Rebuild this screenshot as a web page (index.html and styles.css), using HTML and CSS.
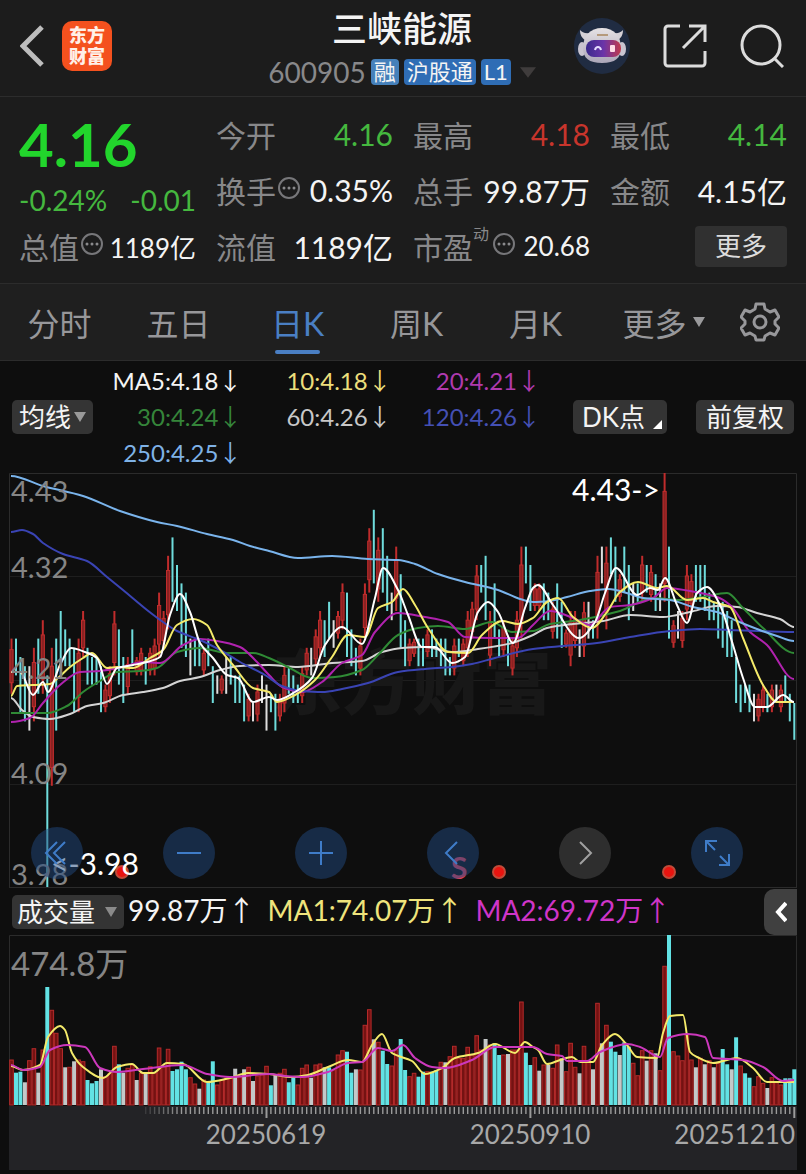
FILE: index.html
```html
<!DOCTYPE html>
<html lang="zh-CN">
<head>
    <meta charset="UTF-8">
    <meta name="viewport" content="width=device-width, initial-scale=1.0">
    <title>三峡能源 600905</title>
    <link rel="stylesheet" href="styles.css">
</head>
<body>
    <header class="top-bar">
        <div class="top-left">
            <button class="icon-button" aria-label="返回">
                <svg width="24" height="42" viewBox="0 0 24 42" fill="none" stroke="#bdbdbd" stroke-width="5"><path d="M22 2 3 21 22 40"/></svg>
            </button>
            <a href="#" class="logo"><span>东方</span><span>财富</span></a>
        </div>
        <div class="stock">
            <h1>三峡能源</h1>
            <div class="stock-code">
                <span class="code">600905</span>
                <span class="tag tag-light">融</span>
                <span class="tag">沪股通</span>
                <span class="tag">L1</span>
                <svg class="code-arrow" width="16" height="11" viewBox="0 0 18 12"><path d="M0 0h18L9 12z" fill="#3f3c3c"/></svg>
            </div>
        </div>
        <div class="top-right">
            <button class="icon-button" aria-label="智能助手">
                <svg width="56" height="56" viewBox="0 0 56 56">
                    <defs>
                        <linearGradient id="visor" x1="0" x2="1"><stop offset="0" stop-color="#3b2a8c"/><stop offset=".5" stop-color="#6a34a8"/><stop offset="1" stop-color="#c23a4c"/></linearGradient>
                        <linearGradient id="helmet" x1="0" y1="0" x2="0" y2="1"><stop offset="0" stop-color="#e6e2e4"/><stop offset="1" stop-color="#aba6b8"/></linearGradient>
                    </defs>
                    <circle cx="28" cy="28" r="28" fill="#202c42"/>
                    <path d="M6 12c0 5 2 8 5 10l5-7c-5 1-8-1-10-3zM49 12c0 5-2 8-5 10l-5-7c5 1 8-1 10-3z" fill="#d5d1d6"/>
                    <ellipse cx="8" cy="31" rx="4" ry="7" fill="#c9c5d0"/>
                    <ellipse cx="48" cy="31" rx="4" ry="7" fill="#c9c5d0"/>
                    <path d="M9 30c0-12 7-20 19-20s19 8 19 20c0 10-6 15-19 15S9 40 9 30z" fill="url(#helmet)"/>
                    <path d="M23 17h11" stroke="#b59a7c" stroke-width="2"/>
                    <rect x="12" y="22" width="35" height="17" rx="8" fill="url(#visor)"/>
                    <path d="M21 32c1-4 5-4 6 0" fill="none" stroke="#e5dcff" stroke-width="2"/>
                    <rect x="36" y="27" width="5" height="7" rx="1" fill="#ffdce6"/>
                </svg>
            </button>
            <button class="icon-button" aria-label="分享">
                <svg width="44" height="44" viewBox="0 0 44 44" fill="none" stroke="#dcdcdc" stroke-width="3"><path d="M17 2H5a3 3 0 0 0-3 3v34a3 3 0 0 0 3 3h34a3 3 0 0 0 3-3V27M26 2h16v16M41 3 20 24"/></svg>
            </button>
            <button class="icon-button" aria-label="搜索">
                <svg width="44" height="44" viewBox="0 0 44 44" fill="none" stroke="#dcdcdc" stroke-width="3"><circle cx="21" cy="21" r="19"/><path d="m34 34 9 9"/></svg>
            </button>
        </div>
    </header>

    <section class="quote">
        <div class="quote-main">
            <div class="price">4.16</div>
            <div class="change"><span>-0.24%</span><span>-0.01</span></div>
            <div class="cell small"><span class="name">总值</span><svg class="info"><use href="#info"/></svg><span class="value">1189亿</span></div>
        </div>
        <div class="quote-col">
            <div class="cell"><span class="name">今开</span><span class="value down">4.16</span></div>
            <div class="cell"><span class="name">换手</span><svg class="info"><use href="#info"/></svg><span class="value">0.35%</span></div>
            <div class="cell"><span class="name">流值</span><span class="value">1189亿</span></div>
        </div>
        <div class="quote-col">
            <div class="cell"><span class="name">最高</span><span class="value up">4.18</span></div>
            <div class="cell"><span class="name">总手</span><span class="value">99.87万</span></div>
            <div class="cell small"><span class="name">市盈<sup>动</sup></span><svg class="info"><use href="#info"/></svg><span class="value">20.68</span></div>
        </div>
        <div class="quote-col">
            <div class="cell"><span class="name">最低</span><span class="value down">4.14</span></div>
            <div class="cell"><span class="name">金额</span><span class="value">4.15亿</span></div>
            <div class="cell"><button class="more-button">更多</button></div>
        </div>
    </section>

    <nav class="tabs">
        <button>分时</button>
        <button>五日</button>
        <button class="active">日K</button>
        <button>周K</button>
        <button>月K</button>
        <button>更多<svg width="12" height="12" viewBox="0 0 12 12"><path d="M0 1h12L6 11z" fill="#9a9a9c"/></svg></button>
        <button aria-label="设置">
            <svg width="40" height="40" viewBox="0 0 40 40" fill="none" stroke="#97979a" stroke-width="3" stroke-linejoin="round">
                <path d="M16 2h8l1 5 5 3 5-2 4 7-4 4v3l4 4-4 7-5-2-5 3-1 4h-8l-1-4-5-3-5 2-4-7 4-4v-3l-4-4 4-7 5 2 5-3z"/>
                <circle cx="20" cy="20" r="6"/>
            </svg>
        </button>
    </nav>

    <main class="charts">
        <section class="legend">
            <button class="chip">均线<svg width="12" height="12" viewBox="0 0 12 12"><path d="M0 1h12L6 11z" fill="#9a9a9a"/></svg></button>
            <ul class="averages">
                <li class="ma5">MA5:4.18<i>↓</i></li>
                <li class="ma10">10:4.18<i>↓</i></li>
                <li class="ma20">20:4.21<i>↓</i></li>
                <li class="ma30">30:4.24<i>↓</i></li>
                <li class="ma60">60:4.26<i>↓</i></li>
                <li class="ma120">120:4.26<i>↓</i></li>
                <li class="ma250">250:4.25<i>↓</i></li>
            </ul>
            <button class="chip chip-dk">DK点<svg width="9" height="9" viewBox="0 0 9 9"><path d="M9 0v9H0z" fill="#fff"/></svg></button>
            <button class="chip chip-adjust">前复权</button>
        </section>

        <section class="k-chart">
            <svg class="plot" viewBox="0 0 788 414" role="img" aria-label="日K线">
                <g class="grid">
                    <path d="M0 103.500h788M0 207.500h788M0 311.500h788"/>
                    <path class="frame" d="M.5 414V.5h787V414"/>
                </g>
                <text class="watermark" x="263" y="236">东方财富</text>
                <g id="candles"></g>
                <g id="price-lines" class="lines"></g>
                <g class="axis">
                    <text x="2" y="29">4.43</text>
                    <text x="2" y="105">4.32</text>
                    <text x="2" y="206">4.21</text>
                    <text x="2" y="311">4.09</text>
                    <text x="2" y="412">3.98</text>
                </g>
                <text class="mark" x="563" y="28">4.43-&gt;</text>
                <g fill="#e81410" stroke="#c24a38" stroke-width="2">
                    <circle cx="113" cy="399" r="6"/>
                    <circle cx="490" cy="399" r="6"/>
                    <circle cx="660" cy="399" r="6"/>
                </g>
                <text class="sell" x="442" y="406">S</text>
                <text class="mark" x="42" y="402">&lt;-3.98</text>
            </svg>
            <div class="controls">
                <button aria-label="最早"><svg viewBox="0 0 52 52"><path d="M26 15 15 26l11 11M34 15 23 26l11 11"/></svg></button>
                <button aria-label="缩小"><svg viewBox="0 0 52 52"><path d="M14 26h24"/></svg></button>
                <button aria-label="放大"><svg viewBox="0 0 52 52"><path d="M14 26h24M26 14v24"/></svg></button>
                <button aria-label="向左"><svg viewBox="0 0 52 52"><path d="M30 15 19 26l11 11"/></svg></button>
                <button class="disabled" aria-label="向右"><svg viewBox="0 0 52 52"><path d="m21 15 11 11-11 11"/></svg></button>
                <button aria-label="全屏"><svg viewBox="0 0 52 52"><path d="M15 25V14h11M15 14l9 9M28 38h10V27M38 38l-9-9"/></svg></button>
            </div>
        </section>

        <section class="volume-bar">
            <button class="chip">成交量<svg width="12" height="12" viewBox="0 0 12 12"><path d="M0 1h12L6 11z" fill="#8a8a8a"/></svg></button>
            <span class="vol">99.87万<i>↑</i></span>
            <span class="vol vol-ma1">MA1:74.07万<i>↑</i></span>
            <span class="vol vol-ma2">MA2:69.72万<i>↑</i></span>
            <button class="collapse" aria-label="展开"><svg width="12" height="22" viewBox="0 0 12 22" fill="none" stroke="#fff" stroke-width="4"><path d="M11 2 3 11l8 9"/></svg></button>
        </section>

        <section class="volume-chart">
            <svg class="plot" viewBox="0 0 788 235" role="img" aria-label="成交量">
                <path class="frame" d="M.5 170V.5h787V170"/>
                <rect class="date-strip" y="171" width="788" height="64"/>
                <text class="volume-max" x="2" y="41">474.8万</text>
                <g id="volumes"></g>
                <g id="volume-lines" class="lines"></g>
                <g id="ticks"></g>
                <g class="dates">
                    <text x="257" y="209" text-anchor="middle">20250619</text>
                    <text x="521" y="209" text-anchor="middle">20250910</text>
                    <text x="786" y="209" text-anchor="end">20251210</text>
                </g>
            </svg>
        </section>
    </main>

    <svg class="symbols" width="0" height="0">
        <symbol id="info" viewBox="0 0 22 22">
            <circle cx="11" cy="11" r="10" fill="none" stroke="#77777a" stroke-width="2"/>
            <g fill="#8a8a8c"><circle cx="6" cy="11" r="1.500"/><circle cx="11" cy="11" r="1.500"/><circle cx="16" cy="11" r="1.500"/></g>
        </symbol>
    </svg>

    <script src="chart.js"></script>
</body>
</html>
```
FILE: styles.css
```css
:root {
    --panel: #1c1c1c;
    --chart: #0e0e0e;
    --line: #2c2c2c;
    --chip: #343434;
    --gray: #88888a;
    --green: #45b83f;
    --red: #c8352c;
    --blue: #4a7fc4;
}

* {
    box-sizing: border-box;
}

body {
    margin: 0;
    background: var(--chart);
    color: #f4f4f4;
    font-family: Lato, "Noto Sans CJK SC", sans-serif;
    font-size: 30px;
}

button {
    padding: 0;
    border: none;
    background: none;
    color: inherit;
    font: inherit;
    cursor: pointer;
}

svg {
    display: block;
    flex: none;
}

/* full-width arrows after the figures */
i {
    font-family: "Noto Sans CJK SC", sans-serif;
    font-style: normal;
    line-height: 1;
}

.symbols {
    position: absolute;
}

/* header */
.top-bar {
    display: grid;
    grid-template-columns: 1fr auto 1fr;
    height: 97px;
    padding: 0 22px 0 20px;
    background: var(--panel);
    border-bottom: 1px solid var(--line);
}

.top-left,
.top-right {
    display: flex;
    align-items: center;
    height: 92px;
}

.top-left {
    gap: 18px;
}

.top-right {
    justify-content: flex-end;
    gap: 33px;
}

.logo {
    display: flex;
    flex-direction: column;
    align-items: center;
    justify-content: center;
    width: 50px;
    height: 50px;
    border-radius: 10px;
    background: #f4511e;
    color: #fff0e8;
    font-size: 18px;
    font-weight: 900;
    line-height: 21px;
    text-decoration: none;
}

.stock {
    padding-top: 5px;
}

h1 {
    margin: 0;
    font-size: 35px;
    font-weight: 500;
    line-height: 46px;
    text-align: center;
}

.stock-code {
    display: flex;
    align-items: center;
    gap: 5px;
    height: 42px;
}

.code {
    color: var(--gray);
    font-size: 28px;
}

.tag {
    height: 26px;
    padding: 0 3px;
    border-radius: 4px;
    background: #2f6db5;
    font-size: 22px;
    line-height: 26px;
}

.tag-light {
    background: #4580ba;
}

.code-arrow {
    margin-left: 4px;
}

/* quote */
.quote {
    display: grid;
    grid-template-columns: repeat(4, 1fr);
    gap: 20px;
    padding: 9px 19px;
    background: var(--panel);
    border-bottom: 1px solid var(--line);
}

.price {
    height: 76px;
    color: #22d52c;
    font-size: 60px;
    font-weight: 700;
    line-height: 76px;
}

.change {
    display: flex;
    justify-content: space-between;
    height: 36px;
    color: var(--green);
    font-size: 28px;
    line-height: 36px;
}

.cell {
    display: flex;
    align-items: center;
    height: 56px;
    white-space: nowrap;
}

.name {
    position: relative;
    color: var(--gray);
}

.name sup {
    position: absolute;
    top: 0;
    left: 100%;
    font-size: 16px;
    line-height: 20px;
}

.info {
    width: 22px;
    height: 22px;
    margin: 0 0 4px 2px;
}

.name:has(sup) + .info {
    margin-left: 20px;
}

.value {
    margin-left: auto;
}

.small .value {
    font-size: 26px;
}

.up {
    color: var(--red);
}

.down {
    color: var(--green);
}

.more-button {
    width: 92px;
    height: 41px;
    margin-left: auto;
    border-radius: 4px;
    background: #303030;
    color: #dcdcdc;
    font-size: 26px;
    line-height: 41px;
}

/* tabs */
.tabs {
    display: grid;
    grid-template-columns: repeat(5, 119fr) 137fr 55fr;
    height: 77px;
    padding-right: 19px;
    background: #1f1f1f;
    border-bottom: 1px solid var(--line);
    color: #97979a;
    font-size: 32px;
}

.tabs button {
    display: flex;
    align-items: center;
    justify-content: center;
    gap: 6px;
}

.tabs .active {
    position: relative;
    color: var(--blue);
}

.tabs .active::after {
    content: "";
    position: absolute;
    bottom: 6px;
    width: 45px;
    height: 4px;
    border-radius: 2px;
    background: var(--blue);
}

/* average legend */
.legend {
    display: flex;
    align-items: center;
    height: 112px;
    padding: 0 12px;
}

.chip {
    display: flex;
    align-items: center;
    gap: 3px;
    height: 34px;
    padding: 0 7px;
    border-radius: 5px;
    background: var(--chip);
    font-size: 26px;
    line-height: 34px;
    white-space: nowrap;
}

.chip-dk {
    gap: 8px;
    margin: 0 29px 0 32px;
    padding: 0 5px 0 9px;
}

.chip-dk svg {
    align-self: flex-end;
    margin-bottom: 5px;
}

.chip-adjust {
    padding: 0 10px;
}

.averages {
    display: grid;
    flex: 1;
    grid-template-columns: repeat(3, 1fr);
    margin: 0;
    padding: 0;
    list-style: none;
    font-size: 24px;
    line-height: 36px;
    text-align: right;
    white-space: nowrap;
}

.ma10 { color: #ecdf7c; }
.ma20 { color: #b03aae; }
.ma30 { color: #35853a; }
.ma60 { color: #c8c8c8; }
.ma120 { color: #4450b4; }
.ma250 { color: #7fb2e6; }

/* charts */
.plot {
    width: 100%;
    height: auto;
}

.k-chart {
    position: relative;
    margin: 0 9px;
}

.grid path {
    stroke: #1e1e1e;
}

.grid .frame,
.frame {
    fill: none;
    stroke: #2b2b2b;
}

.lines path {
    fill: none;
    stroke-width: 2;
    stroke-linejoin: round;
}

.watermark {
    fill: #181818;
    font-size: 70px;
    font-weight: 900;
}

.axis {
    fill: #858585;
    font-size: 29px;
}

.mark {
    fill: #fff;
    font-size: 30px;
}

.sell {
    fill: #d8405a;
    font-size: 30px;
    font-weight: 700;
}

.controls {
    position: absolute;
    right: 54px;
    bottom: 8px;
    left: 22px;
    display: flex;
    justify-content: space-between;
}

.controls button {
    width: 52px;
    height: 52px;
    border-radius: 50%;
    background: rgba(31, 72, 126, 0.5);
}

.controls svg {
    fill: none;
    stroke: #3f7cc8;
    stroke-width: 2;
}

.controls .disabled {
    background: #2e2e2e;
}

.controls .disabled svg {
    stroke: #a0a0a0;
}

.volume-bar {
    display: flex;
    align-items: center;
    height: 48px;
    margin: 0 9px;
    padding-left: 3px;
    border-top: 1px solid #2b2b2b;
    font-size: 28px;
    line-height: 44px;
}

.volume-bar .chip {
    gap: 10px;
    margin-right: 4px;
    padding: 0 7px 0 5px;
}

.vol {
    height: 48px;
    margin-right: 12px;
    white-space: nowrap;
}

.vol-ma1 {
    color: #efe47c;
}

.vol-ma2 {
    color: #cf35c8;
}

.collapse {
    display: flex;
    align-items: center;
    justify-content: center;
    width: 33px;
    height: 46px;
    margin-left: auto;
    border-radius: 10px 0 0 10px;
    background: #404040;
}

.volume-chart {
    margin: 0 9px;
    padding-bottom: 4px;
}

.volume-max {
    fill: #858585;
    font-size: 33px;
}

.date-strip {
    fill: #232326;
}

.dates {
    fill: #a8a8a8;
    font-size: 26px;
}
```
FILE: chart.js
```js
const STEP = 4.473;
const CENT = 9.2;
const COLORS = { r: '#c02c2c', c: '#6fdcdc', w: '#dedede' };

// colour, high and low of each day, in cents below 4.43
const candles = `r18-24 c18-22 c20-26 c21-27 w21-28 r19-27 c18-24 r16-24 c22-45 r19-34
c18-28 c15-21 c17-21 c18-21 c19-26 r18-26 r15-20 c19-23 c20-23 c20-23
c21-26 r23-26 r21-25 r15-22 c17-23 c20-25 r20-24 c17-21 r20-22 r19-22
c20-23 r19-22 r18-22 r13-20 r15-19 r9-17 c7-14 c10-15 c12-19 c13-20
w18-22 c18-21 c18-21 r19-22 c18-21 c21-25 w22-24 r22-24 w20-24 c20-23
c22-25 c22-25 c23-27 r24-27 w25-27 r23-27 w22-25 w23-28 c24-26 c24-28
r24-27 r21-26 c21-24 c22-25 c23-25 r21-25 r19-22 w19-22 r17-21 r15-20
c16-20 c14-18 w16-19 r15-18 r12-17 c13-20 c17-21 c19-22 r18-22 r12-18
r6-13 c4-12 r7-14 c6-13 c9-15 w13-16 r8-15 c11-19 c16-21 r18-21
r18-20 c18-21 c18-21 r17-20 c17-20 c18-20 c18-21 c18-22 c20-22 r18-22
c18-20 r18-21 r15-20 r14-18 r10-16 c10-13 c9-16 r15-21 c12-18 c17-20
r16-20 c18-21 r18-22 r15-20 r8-18 c8-12 c10-15 r12-15 r12-15 c12-16
c13-16 r14-18 c12-18 c14-19 r17-19 r15-21 r15-19 w17-20 r14-20 w14-18
c16-18 r9-18 w8-12 r8-17 c7-11 c8-14 r11-14 c8-13 c10-16 w12-15
c12-14 r9-14 c10-13 r10-14 c11-15 w12-15 r0-14 c8-18 r16-19 w15-18
r15-19 r10-16 r11-15 c10-14 c10-14 c10-15 c13-16 c14-16 c14-18 c14-19
c15-20 c16-20 c20-25 c23-26 c23-25 c23-26 w24-27 r24-27 r23-26 c24-26
r23-26 w23-25 r23-26 c22-25 c24-27 c25-29`.split(/\s+/);

// colour and bar size of each day, three units to a pixel
const volumes = `r135 c97 c100 w68 r133 r169 w97 r165 c354 r284 r215 r169 w113 r113 w131 r135 r130 c75 c65 c72
w107 r85 r95 r176 c122 w97 r110 r120 w75 r95 w95 r115 r95 r171 r115 r167 c102 c107 c130 c107
r82 r63 w49 r75 c70 c131 r60 r75 r80 r80 w109 r85 w107 r113 w72 r87 r90 r116 c59 w90
r95 r107 c68 c85 r60 r110 r120 w82 r120 r123 w113 c113 r105 r150 r163 c160 c97 w107 r105 r239
r286 w197 r188 c163 c123 r117 r165 c198 c105 r85 r95 c85 c100 r100 c100 c105 r128 w128 r145 r176
r140 r140 r173 r150 r208 r165 w198 r180 c185 c150 r150 w153 r165 r165 r309 c157 c120 r142 w103 r120
w120 r110 r180 w140 r100 r185 r113 w95 r176 r133 w107 r305 w185 r239 c190 c160 w150 c188 c175 r125
r88 r163 w133 r163 w155 r103 r416 c510 r160 r147 r133 r210 r135 w113 r140 w122 r133 w113 r125 c168
c122 w107 c203 r117 c95 c82 r55 r85 r65 w51 r82 r70 r60 c80 c80 c107`.split(/\s+/);

const priceLines = [
    ['#d4d4d4', '2,225 13,237 24,244 41,246 61,241 78,233 94,230 114,222 134,219 154,215 171,208 191,204 211,197 231,193 260,192 289,194 323,190 353,188 373,179 393,175 416,174 443,179 469,176 503,170 524,162 538,155 564,151 594,148 621,142 654,144 681,139 708,133 728,134 748,140 771,146 785,154'],
    ['#2f8a35', '2,240 38,240 58,233 74,219 91,208 108,199 131,198 148,195 168,179 191,175 218,180 244,180 260,185 279,194 303,205 326,204 353,197 369,182 389,162 409,155 429,153 456,156 483,149 503,159 524,158 541,151 571,147 611,138 644,125 671,127 694,124 718,120 734,135 754,155 785,180'],
    ['#b022ae', '2,249 21,245 34,230 51,212 71,199 91,198 114,194 134,189 151,190 174,172 191,166 208,168 231,174 248,189 260,202 273,214 293,219 313,209 333,190 353,182 366,159 389,140 416,144 439,149 456,164 483,165 509,165 524,152 541,138 564,145 581,152 601,134 621,132 644,125 658,115 681,118 708,124 721,132 741,159 758,172 785,206'],
    ['#3a44b4', '2,59 13,57 24,61 34,70 54,81 78,88 98,104 114,117 138,137 154,149 168,158 191,167 211,177 231,189 256,202 273,213 293,218 313,219 333,216 359,210 389,199 416,196 443,194 463,191 486,185 524,176 554,173 588,170 621,164 661,158 691,156 721,157 785,159'],
    ['#7ab4ec', '2,3 34,13 74,23 111,38 148,49 168,53 198,61 224,67 241,73 260,78 289,85 323,83 359,86 389,87 406,91 429,101 456,109 489,117 511,126 524,129 541,128 558,124 581,118 599,116 621,121 634,125 661,127 684,134 708,139 728,148 748,156 768,163 785,168'],
    ['#f4ea6a', '2,223 8,213 24,212 41,211 49,205 61,194 74,185 83,180 98,195 108,194 124,195 141,185 154,177 168,152 184,146 198,152 208,172 224,192 244,215 260,219 268,229 286,222 306,207 323,184 339,162 356,164 369,135 383,129 394,116 406,132 419,155 439,179 459,180 473,162 493,148 509,151 524,145 538,129 549,125 564,144 583,155 598,139 611,119 629,109 648,115 658,113 678,127 694,125 704,129 721,134 734,165 754,212 768,229 785,229'],
    ['#ffffff', '2,199 11,199 24,222 34,209 39,219 51,192 62,175 76,179 88,185 98,211 108,195 124,192 138,189 151,184 161,142 171,121 181,139 191,170 204,185 218,202 229,205 244,229 260,224 268,227 286,219 303,205 316,172 333,154 353,171 366,125 374,95 389,117 399,142 413,174 426,174 443,190 456,184 469,139 479,129 489,139 504,170 516,135 524,115 529,112 544,132 570,165 586,149 596,120 607,95 628,122 641,115 649,117 656,105 668,132 678,150 688,120 698,114 711,132 724,172 734,205 746,234 758,234 774,222 785,229']
];

const volumeLines = [
    ['#f4ea6a', '2,131 14,135 31,130 39,102 51,91 56,95 63,118 74,132 94,143 108,132 123,129 134,138 144,138 158,128 174,129 198,147 221,143 239,138 260,139 283,142 299,140 319,132 339,125 353,127 363,110 373,99 383,118 403,126 416,139 433,133 446,123 469,118 486,109 506,118 516,107 524,112 529,115 538,129 551,125 563,122 571,127 584,127 593,110 606,99 618,110 628,122 648,123 654,98 661,81 674,80 681,117 688,122 704,128 728,123 744,133 758,147 785,147'],
    ['#cc38bc', '2,130 14,135 31,132 41,115 58,110 76,112 91,133 108,137 134,134 174,130 198,139 221,142 260,139 276,141 293,142 319,137 339,128 353,127 369,113 383,116 394,110 406,123 423,132 436,133 463,125 486,112 524,112 538,119 553,121 558,126 578,126 591,117 618,109 631,112 651,122 659,103 679,99 696,102 704,123 734,125 754,132 774,146 785,145']
];

function dayX(i) {
    return 2.5 + i * STEP;
}

function rect(x, y, w, h, fill, stroke) {
    return `<rect x="${x.toFixed(1)}" y="${y.toFixed(1)}" width="${w}" height="${h.toFixed(1)}" fill="${fill}" stroke="${stroke || 'none'}"/>`;
}

// slope at point i, flat at peaks so that the curve never overshoots
function slope(p, i) {
    if (i === 0 || i === p.length - 1) {
        return 0;
    }
    const before = (p[i][1] - p[i - 1][1]) / (p[i][0] - p[i - 1][0]);
    const after = (p[i + 1][1] - p[i][1]) / (p[i + 1][0] - p[i][0]);
    return before * after <= 0 ? 0 : 2 * before * after / (before + after);
}

function curve(points) {
    const p = points.split(' ').map(s => s.split(',').map(Number));
    let d = `M${p[0]}`;
    for (let i = 0; i < p.length - 1; i++) {
        const [x1, y1] = p[i];
        const [x2, y2] = p[i + 1];
        const k = (x2 - x1) / 3;
        d += `C${x1 + k},${y1 + slope(p, i) * k} ${x2 - k},${y2 - slope(p, i + 1) * k} ${x2},${y2}`;
    }
    return d;
}

function drawLines(id, lines) {
    document.getElementById(id).innerHTML = lines
        .map(([color, points]) => `<path d="${curve(points)}" stroke="${color}"/>`)
        .join('');
}

document.getElementById('candles').innerHTML = candles.map((item, i) => {
    const color = COLORS[item[0]];
    const [high, low] = item.slice(1).split('-').map(v => v * CENT);
    const x = dayX(i);
    const wick = rect(x - 1, high, 2, low - high, color);
    if (item[0] !== 'r') {
        return wick;
    }
    const inset = Math.min((low - high) / 5, CENT * 2);
    return wick + rect(x - 1.6, high + inset, 3.2, low - high - inset * 2, '#8a2222', color);
}).join('');

document.getElementById('volumes').innerHTML = volumes.map((item, i) => {
    const h = item.slice(1) / 3;
    const x = dayX(i);
    if (item[0] === 'r') {
        return rect(x - 1.8, 170 - h, 3.6, h, '#741212', '#b42a2a');
    }
    return rect(x - 2, 170 - h, 4, h, item[0] === 'c' ? '#62e2e4' : '#c4c8c8');
}).join('');

let ticks = '';
for (let i = 30; i < 176; i++) {
    const major = i === 57 || i === 116 || i === 175;
    const opacity = Math.min(1, (i - 28) / 10);
    ticks += `<path d="M${dayX(i).toFixed(1)} 172v${major ? 11 : 7}" stroke="#9a9a9a" stroke-width="${major ? 2 : 1.4}" opacity="${opacity}"/>`;
}
document.getElementById('ticks').innerHTML = ticks;

drawLines('price-lines', priceLines);
drawLines('volume-lines', volumeLines);
```
